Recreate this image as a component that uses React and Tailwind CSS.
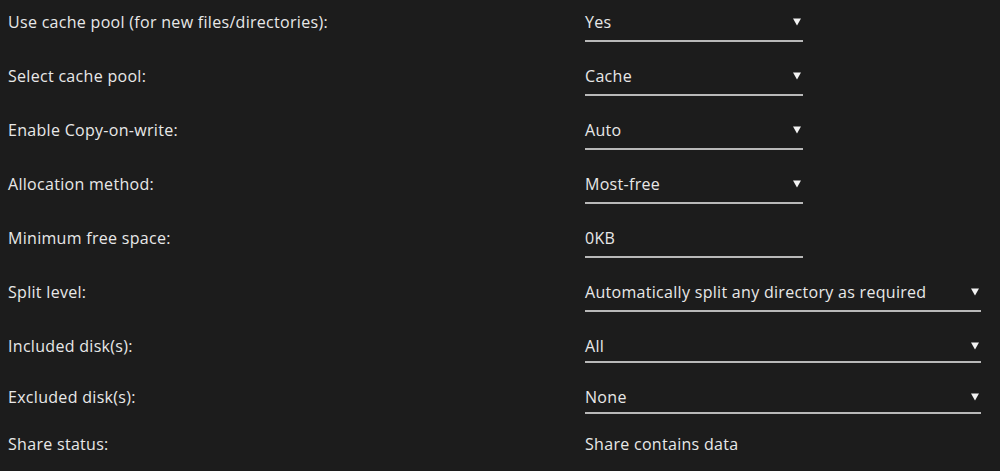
import React from "react";

const Arrow = () => (
  <svg width="8" height="8" viewBox="0 0 8 8" className="shrink-0">
    <path d="M0 0.5 H8 L4 7.5 Z" fill="#f2f2f2" />
  </svg>
);

function Row({ label, value, select, wide, h = "h-[54px]", box = "h-[42px] pt-[4px]", underline = true }) {
  return (
    <div className={`flex items-start ${h}`}>
      <div className={`w-[585px] pl-2 flex items-center ${box} border-b-2 border-transparent`}>
        {label}
      </div>
      <div
        className={`${wide ? "w-[396px]" : "w-[218px]"} flex items-center justify-between ${box} ${
          underline ? "border-b-2 border-[#b8b8b8]" : "border-b-2 border-transparent"
        }`}
      >
        <span>{value}</span>
        {select && (
          <span className="pr-[2px] pb-[1px]">
            <Arrow />
          </span>
        )}
      </div>
    </div>
  );
}

export default function App() {
  return (
    <div
      className="w-[1000px] h-[471px] bg-[#1c1c1c] text-[#e8e8e8] text-[16px] tracking-[0.3px] overflow-hidden"
      style={{ fontFamily: '"Open Sans", "DejaVu Sans", sans-serif' }}
    >
      <Row label="Use cache pool (for new files/directories):" value="Yes" select />
      <Row label="Select cache pool:" value="Cache" select />
      <Row label="Enable Copy-on-write:" value="Auto" select />
      <Row label="Allocation method:" value="Most-free" select />
      <Row label="Minimum free space:" value="0KB" />
      <Row label="Split level:" value="Automatically split any directory as required" select wide />
      <Row label="Included disk(s):" value="All" select wide h="h-[51px]" box="h-[39px] pt-[7px]" />
      <Row label="Excluded disk(s):" value="None" select wide h="h-[51px]" box="h-[39px] pt-[7px]" />
      <Row label="Share status:" value="Share contains data" h="h-[45px]" box="h-[36px] pt-[1px]" underline={false} />
    </div>
  );
}
